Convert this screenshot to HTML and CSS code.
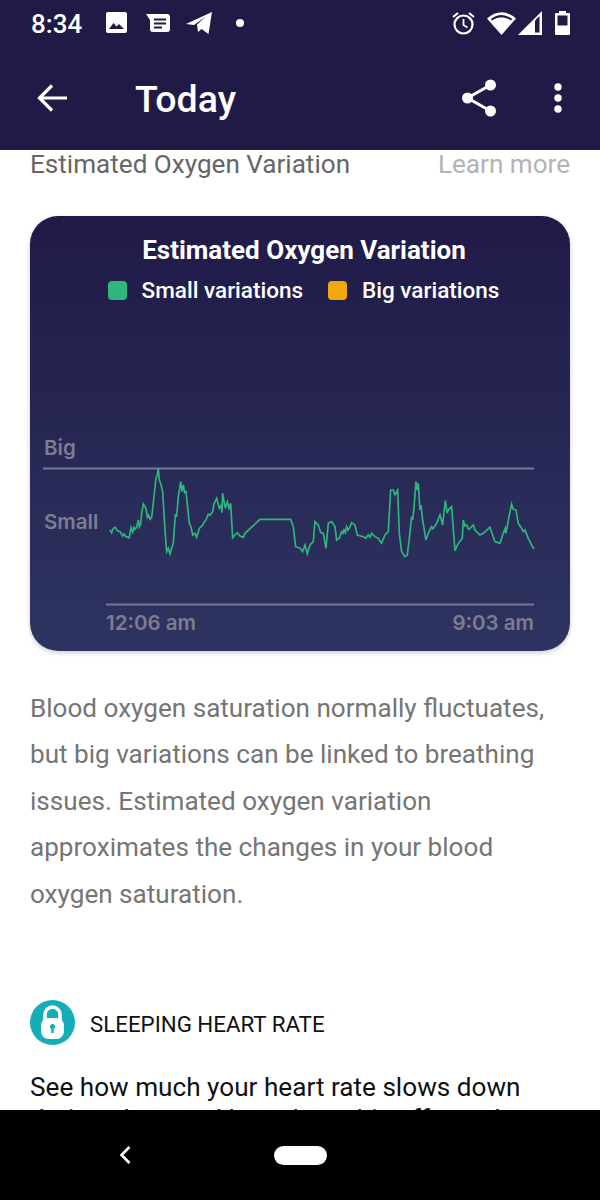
FILE: index.html
```html
<!DOCTYPE html>
<html>
    <head lang="en">
        <meta charset="UTF-8">
        <title>Today</title>
        <link rel="stylesheet" href="styles.css">
    </head>
    <body>
        <div id="screen">
            <div id="header">
                <div id="status">
                    <span id="time">8:34</span>
                    <svg class="ic-image" width="21" height="21" viewBox="0 0 21 21"><rect width="21" height="21" rx="2" fill="#fff"/><path d="M3 17l4.500-6 3 3.500 2.500-2.500 5 5z" fill="#201a47"/></svg>
                    <svg class="ic-msg" width="24" height="18" viewBox="0 0 24 18"><path d="M0 0h21a3 3 0 0 1 3 3v12a3 3 0 0 1-3 3H7a3 3 0 0 1-3-3V6z" fill="#fff"/><path d="M8 4.500h12v2H8zM8 8.500h12v2H8zM8 12.500h8v2H8z" fill="#201a47"/></svg>
                    <svg class="ic-plane" width="26" height="22" viewBox="0 0 26 22"><path d="M0 12L26 0l-3.500 22-7-5-3.500 3-1-7.500L20 4.500 8 13z" fill="#fff"/></svg>
                    <span id="dot"></span>
                    <span class="spacer"></span>
                    <svg class="ic-alarm" width="23" height="24" viewBox="0 0 23 24"><circle cx="11.500" cy="13.500" r="9" fill="none" stroke="#fff" stroke-width="2.200"/><path d="M11.500 8v6l4 2.500" fill="none" stroke="#fff" stroke-width="1.800"/><path d="M1 6l5-4M22 6l-5-4" stroke="#fff" stroke-width="2.200"/></svg>
                    <svg class="ic-wifi" width="29" height="24" viewBox="0 0 29 24"><path d="M0 7.500Q14.500-5 29 7.500L14.500 24z" fill="#fff"/><path d="M3.800 8Q14.500 0 25.200 8l-1.200 1.500Q14.500 3 5 9.500z" fill="#201a47"/></svg>
                    <svg class="ic-signal" width="24" height="24" viewBox="0 0 24 24"><path d="M0 24L24 0v24z" fill="#fff"/><path d="M17 21.500V9.500l4.500-4.500v16.500z" fill="#201a47"/></svg>
                    <svg class="ic-battery" width="15" height="24" viewBox="0 0 15 24"><path d="M4 0h7v2h3a1 1 0 0 1 1 1v20a1 1 0 0 1-1 1H1a1 1 0 0 1-1-1V3a1 1 0 0 1 1-1h3z" fill="#fff"/><rect x="2.500" y="4.500" width="10" height="10" fill="#201a47"/></svg>
                </div>
                <div id="appbar">
                    <svg class="ic-back" width="31" height="28" viewBox="0 0 31 28"><path d="M30 14H3M15 1.500L2.500 14 15 26.500" fill="none" stroke="#fff" stroke-width="3.200"/></svg>
                    <span id="title">Today</span>
                    <span class="spacer"></span>
                    <svg class="ic-share" width="35" height="38" viewBox="0 0 35 38"><path d="M28.500 6L5.500 19l23 13" fill="none" stroke="#fff" stroke-width="3"/><circle cx="28.500" cy="6" r="5.500" fill="#fff"/><circle cx="5.500" cy="19" r="5.500" fill="#fff"/><circle cx="28.500" cy="32" r="5.500" fill="#fff"/></svg>
                    <svg class="ic-more" width="8" height="30" viewBox="0 0 8 30"><circle cx="4" cy="4" r="3.700" fill="#fff"/><circle cx="4" cy="15" r="3.700" fill="#fff"/><circle cx="4" cy="26" r="3.700" fill="#fff"/></svg>
                </div>
            </div>
            <div id="content">
                <div id="intro">
                    <span>Estimated Oxygen Variation</span>
                    <span id="learn">Learn more</span>
                </div>
                <div id="card">
                    <h2>Estimated Oxygen Variation</h2>
                    <div id="legend">
                        <i class="swatch green"></i><span>Small variations</span>
                        <i class="swatch orange"></i><span>Big variations</span>
                    </div>
                    <svg id="chart" width="540" height="210" viewBox="0 0 540 210">
                        <text class="axis" x="14" y="25">Big</text>
                        <text class="axis" x="14" y="99">Small</text>
                        <text class="axis" x="76" y="200">12:06 am</text>
                        <text class="axis" x="504" y="200" text-anchor="end">9:03 am</text>
                        <line class="rule" x1="13" y1="38.500" x2="504" y2="38.500"/>
                        <line class="rule" x1="76" y1="174.500" x2="504" y2="174.500"/>
                        <g transform="scale(.3333)">
                            <polyline class="trace" points="240,300 245,308 250,295 256,292 262,302 270,305 278,318 282,312 288,320 298,323 303,293 308,307 312,292 315,298 320,292 325,270 328,290 332,282 335,250 340,222 348,235 352,262 356,255 360,268 365,262 372,200 378,145 382,135 385,115 388,150 392,160 398,185 405,300 410,365 415,355 420,372 425,355 430,340 436,255 440,258 445,200 452,155 456,185 460,165 464,188 468,185 478,280 483,290 488,315 495,310 500,322 508,295 518,285 530,265 535,252 540,256 548,245 552,222 560,205 568,235 574,225 576,248 578,190 586,235 592,215 597,235 602,220 606,290 608,323 615,315 622,308 630,318 640,322 645,310 690,268 782,268 790,290 797,350 810,355 818,365 825,345 832,372 840,345 850,335 855,275 865,285 872,308 880,310 888,355 895,280 905,275 915,290 920,330 928,325 935,305 939,310 942,300 946,308 950,290 954,300 958,295 965,278 975,285 982,315 1000,320 1007,325 1015,315 1020,322 1025,310 1035,320 1045,325 1055,340 1065,315 1075,305 1082,180 1090,180 1095,195 1103,180 1108,310 1115,365 1125,380 1132,375 1138,325 1145,260 1148,270 1152,235 1158,155 1162,180 1165,160 1170,240 1173,225 1178,270 1188,330 1195,310 1205,290 1209,296 1220,280 1230,255 1238,285 1246,212 1252,250 1255,240 1265,230 1275,362 1285,340 1297,325 1300,270 1305,288 1310,285 1316,298 1320,295 1330,285 1335,300 1340,305 1350,315 1360,310 1380,292 1395,335 1410,340 1420,310 1426,295 1428,310 1438,255 1445,222 1450,238 1458,240 1465,280 1475,295 1480,305 1485,300 1495,325 1505,345 1512,357"/>
                        </g>
                    </svg>
                </div>
                <p id="about">Blood oxygen saturation normally fluctuates, but big variations can be linked to breathing issues. Estimated oxygen variation approximates the changes in your blood oxygen saturation.</p>
                <div id="section">
                    <svg width="45" height="45" viewBox="0 0 45 45"><circle cx="22.500" cy="22.500" r="22.500" fill="#14aeb8"/><path d="M15 20v-5.500a7.500 7.500 0 0 1 15 0V20" fill="none" stroke="#fff" stroke-width="3.500"/><rect x="11" y="18" width="23" height="21" rx="7.500" fill="#fff"/><circle cx="22.500" cy="26.500" r="2.500" fill="#14aeb8"/><rect x="21.300" y="27" width="2.400" height="6" fill="#14aeb8"/></svg>
                    <span>SLEEPING HEART RATE</span>
                </div>
                <p id="more">See how much your heart rate slows down during sleep and learn how this affects deep</p>
            </div>
            <div id="nav">
                <svg width="14" height="20" viewBox="0 0 14 20"><path d="M11.500 2L3.500 10l8 8" fill="none" stroke="#fff" stroke-width="2.600"/></svg>
                <span id="pill"></span>
            </div>
        </div>
    </body>
</html>
```

FILE: styles.css
```css
*{
    margin:0;
    padding:0;
    box-sizing:border-box;
}
body{
    font-family:Roboto,sans-serif;
    background:#fff;
}
#screen{
    width:600px;
    height:1200px;
    display:flex;
    flex-direction:column;
    overflow:hidden;
}
.spacer{
    flex:1;
}
#header{
    height:150px;
    flex:none;
    background:#201a47;
    color:#fff;
}
#status{
    height:45px;
    display:flex;
    align-items:center;
    padding:0 30px 0 31px;
}
#time{
    font-size:26px;
    font-weight:500;
    width:75px;
    padding-top:3px;
}
.ic-msg{
    margin-left:19px;
}
.ic-plane{
    margin-left:16px;
}
#dot{
    width:8px;
    height:8px;
    border-radius:50%;
    background:#fff;
    margin-left:24px;
}
.ic-wifi{
    margin-left:12px;
}
.ic-signal{
    margin-left:2px;
}
.ic-battery{
    margin-left:13px;
}
#appbar{
    height:105px;
    display:flex;
    align-items:center;
    padding:0 38px 0 37px;
}
#title{
    font-size:37.500px;
    font-weight:500;
    margin-left:67px;
    padding-top:3px;
}
.ic-more{
    margin-left:57px;
}
#content{
    flex:1;
    min-height:0;
    overflow:hidden;
    padding:0 30px;
}
#intro{
    display:flex;
    justify-content:space-between;
    font-size:26.100px;
    line-height:28px;
    color:#666;
}
#learn{
    color:#b3b3b3;
}
#card{
    margin-top:38px;
    height:435px;
    border-radius:28px;
    background:linear-gradient(#201a47,#2e3461);
    box-shadow:0 2px 5px rgba(0,0,0,.2);
    display:flex;
    flex-direction:column;
    color:#fff;
}
#card h2{
    font-size:26px;
    font-weight:700;
    text-align:center;
    padding:18px 0 0 8px;
    line-height:32px;
}
#legend{
    display:flex;
    align-items:center;
    justify-content:center;
    padding-left:7px;
    margin-top:9px;
    font-size:22.500px;
    font-weight:500;
    line-height:30px;
}
.swatch{
    width:19px;
    height:19px;
    border-radius:4px;
    margin-right:15px;
}
.green{
    background:#2fb67c;
}
.orange{
    background:#f4a60d;
    margin-left:25px;
}
#chart{
    display:block;
    margin-top:auto;
    margin-bottom:11px;
}
.axis{
    font-family:Inter,sans-serif;
    font-size:20.500px;
    font-weight:600;
    fill:#7d7d8f;
}
.rule{
    stroke:#77779c;
    stroke-width:2;
}
.trace{
    fill:none;
    stroke:#2fb67c;
    stroke-width:5;
}
#about{
    margin-top:34px;
    font-size:26.100px;
    line-height:46.400px;
    color:#757575;
}
#section{
    display:flex;
    align-items:center;
    margin-top:83px;
    font-size:22.300px;
    color:#111;
}
#section span{
    margin-left:15px;
    padding-top:2px;
}
#more{
    margin-top:26px;
    font-size:26.150px;
    line-height:32px;
    color:#111;
}
#nav{
    height:90px;
    flex:none;
    background:#000;
    display:flex;
    align-items:center;
    padding:0 0 0 118px;
}
#pill{
    width:53px;
    height:19px;
    border-radius:10px;
    background:#fff;
    margin-left:142px;
}
```
